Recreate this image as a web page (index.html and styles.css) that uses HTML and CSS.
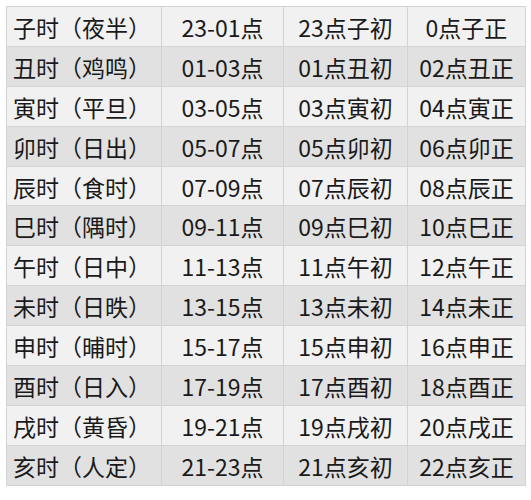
FILE: index.html
```html
<!DOCTYPE html>
<html lang="zh-CN">
<head>
<meta charset="utf-8">
<title>十二时辰</title>
<link rel="stylesheet" href="styles.css">
</head>
<body>
<table class="shichen">
  <colgroup>
    <col class="c1"><col class="c2"><col class="c3"><col class="c4">
  </colgroup>
  <tbody>
    <tr><td class="name">子时（夜半）</td><td>23-01点</td><td>23点子初</td><td>0点子正</td></tr>
    <tr><td class="name">丑时（鸡鸣）</td><td>01-03点</td><td>01点丑初</td><td>02点丑正</td></tr>
    <tr><td class="name">寅时（平旦）</td><td>03-05点</td><td>03点寅初</td><td>04点寅正</td></tr>
    <tr><td class="name">卯时（日出）</td><td>05-07点</td><td>05点卯初</td><td>06点卯正</td></tr>
    <tr><td class="name">辰时（食时）</td><td>07-09点</td><td>07点辰初</td><td>08点辰正</td></tr>
    <tr><td class="name">巳时（隅时）</td><td>09-11点</td><td>09点巳初</td><td>10点巳正</td></tr>
    <tr><td class="name">午时（日中）</td><td>11-13点</td><td>11点午初</td><td>12点午正</td></tr>
    <tr><td class="name">未时（日昳）</td><td>13-15点</td><td>13点未初</td><td>14点未正</td></tr>
    <tr><td class="name">申时（晡时）</td><td>15-17点</td><td>15点申初</td><td>16点申正</td></tr>
    <tr><td class="name">酉时（日入）</td><td>17-19点</td><td>17点酉初</td><td>18点酉正</td></tr>
    <tr><td class="name">戌时（黄昏）</td><td>19-21点</td><td>19点戌初</td><td>20点戌正</td></tr>
    <tr><td class="name">亥时（人定）</td><td>21-23点</td><td>21点亥初</td><td>22点亥正</td></tr>
  </tbody>
</table>
</body>
</html>
```
FILE: styles.css
```css
html, body {
  margin: 0;
  padding: 0;
  background: #ffffff;
}

body {
  padding: 6px 0 0 6px;
  font-family: "Noto Sans CJK SC", "Noto Sans", sans-serif;
  color: #1a1a1a;
}

.shichen {
  border-collapse: collapse;
  table-layout: fixed;
  width: 519px;
  font-size: 23px;
  line-height: 1;
}

.c1 { width: 155px; }
.c2 { width: 122px; }
.c3 { width: 124px; }
.c4 { width: 118px; }

.shichen tr {
  height: 39.9px;
}

.shichen tr:nth-child(odd) {
  background: #f1f1f1;
}

.shichen tr:nth-child(even) {
  background: #e1e1e1;
}

.shichen td {
  border: 1px solid #d3d3d3;
  padding: 2px 0 0;
  text-align: center;
  vertical-align: middle;
  white-space: nowrap;
}

.shichen td.name {
  text-align: left;
  padding-left: 6px;
}
```
